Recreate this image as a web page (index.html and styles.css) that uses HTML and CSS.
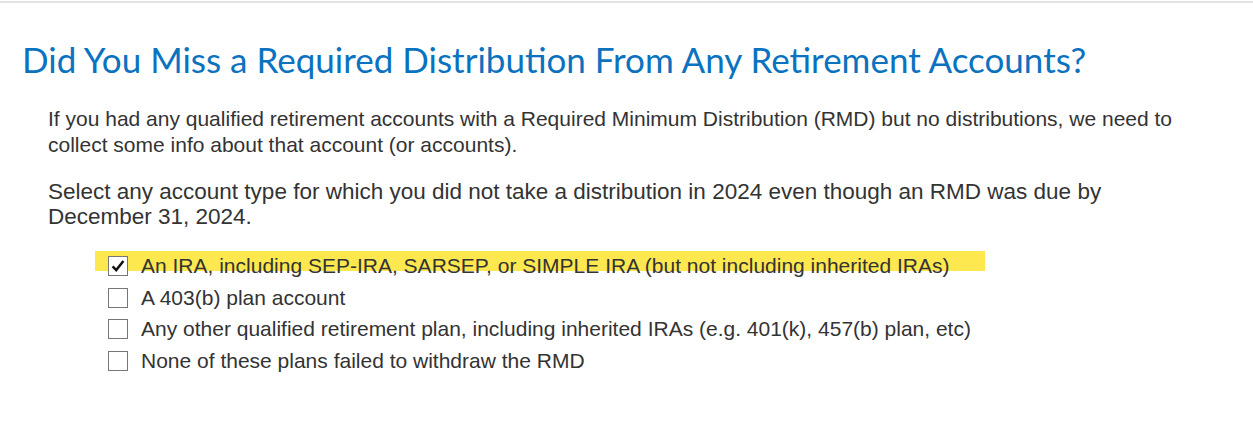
FILE: index.html
```html
<!DOCTYPE html>
<html>
<head>
<meta charset="utf-8">
<link rel="stylesheet" href="styles.css">
</head>
<body>
<div class="page">
  <h1 class="title">Did You Miss a Required Distribution From Any Retirement Accounts?</h1>
  <p class="intro">If you had any qualified retirement accounts with a Required Minimum Distribution (RMD) but no distributions, we need to collect some info about that account (or accounts).</p>
  <p class="question">Select any account type for which you did not take a distribution in 2024 even though an RMD was due by December 31, 2024.</p>
  <div class="options">
    <div class="highlight"></div>
    <label class="option"><span class="box checked"><svg viewBox="0 0 20 20" width="20" height="20"><path d="M4 10.5 L8 14.5 L16 4.5" fill="none" stroke="#111" stroke-width="2.8"/></svg></span><span class="label">An IRA, including SEP-IRA, SARSEP, or SIMPLE IRA (but not including inherited IRAs)</span></label>
    <label class="option"><span class="box"></span><span class="label">A 403(b) plan account</span></label>
    <label class="option"><span class="box"></span><span class="label">Any other qualified retirement plan, including inherited IRAs (e.g. 401(k), 457(b) plan, etc)</span></label>
    <label class="option"><span class="box"></span><span class="label">None of these plans failed to withdraw the RMD</span></label>
  </div>
</div>
</body>
</html>
```

FILE: styles.css
```css
html, body {
  margin: 0;
  padding: 0;
  background: #fff;
}
.page {
  border-top: 2px solid #e2e2e2;
  margin-top: 1px;
  padding: 0 0 0 22px;
  font-family: "Liberation Sans", Arial, sans-serif;
  color: #333;
}
.title {
  margin: 34px 0 0 0;
  font-family: "Lato", "Open Sans", sans-serif;
  font-weight: 400;
  font-size: 35px;
  line-height: 44px;
  color: #0b72c0;
}
.intro {
  margin: 25px 0 0 26px;
  font-size: 21px;
  line-height: 26px;
  max-width: 1150px;
}
.question {
  margin: 21px 0 0 26px;
  font-size: 22.5px;
  line-height: 25px;
  max-width: 1080px;
}
.options {
  position: relative;
  margin: 21px 0 0 86px;
}
.highlight {
  position: absolute;
  left: -13px;
  top: 1px;
  width: 890px;
  height: 20px;
  background: #fde94f;
  z-index: 0;
}
.option {
  position: relative;
  z-index: 1;
  display: flex;
  align-items: center;
  height: 31.7px;
  font-size: 21px;
}
.box {
  width: 20px;
  height: 20px;
  border: 1px solid #767676;
  background: #fff;
  box-sizing: border-box;
  margin-right: 13px;
  display: flex;
  align-items: center;
  justify-content: center;
}
.box svg {
  width: 18px;
  height: 18px;
}
.label {
  white-space: nowrap;
}
```
